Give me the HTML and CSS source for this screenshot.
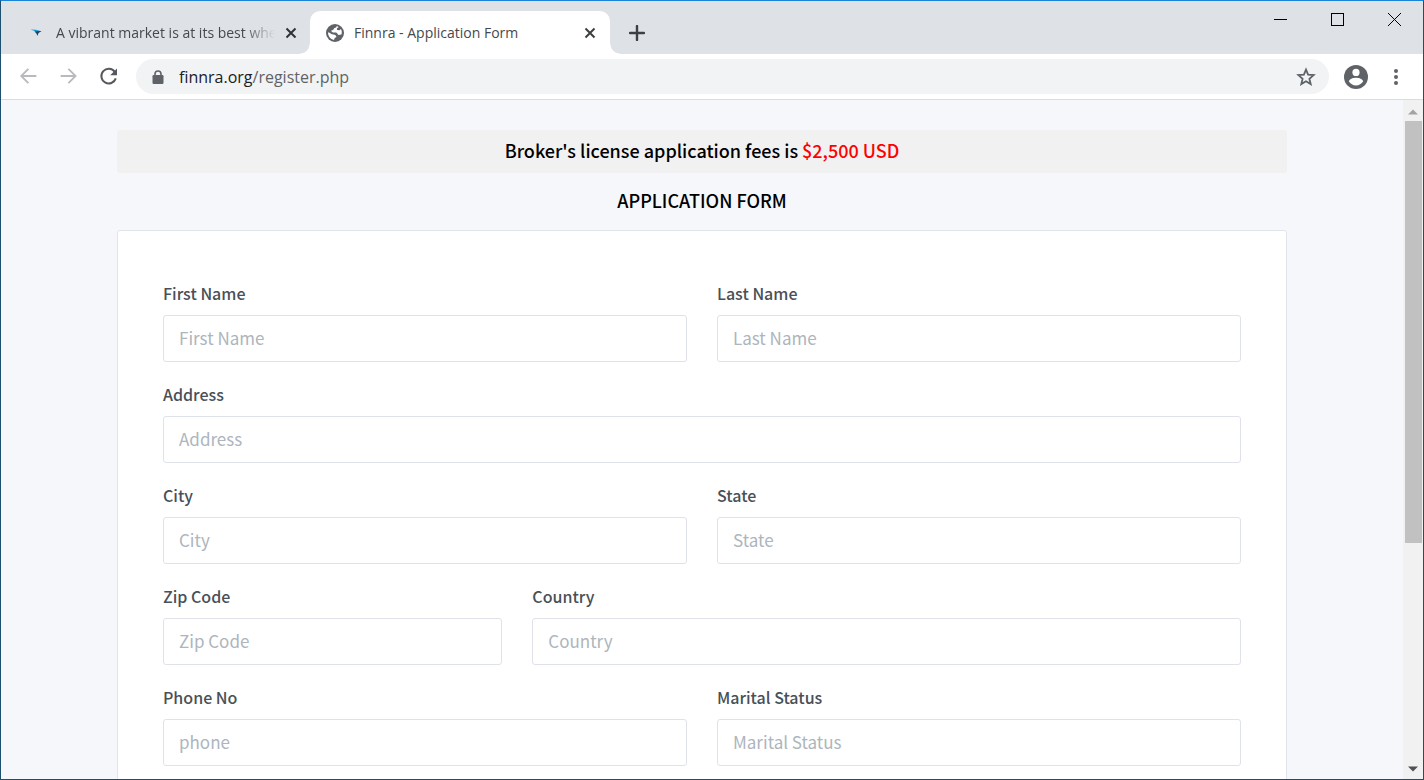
FILE: index.html
```html
<!DOCTYPE html>
<html lang="en">
<head>
  <meta charset="UTF-8">
  <meta name="viewport" content="width=device-width, initial-scale=1">
  <title>Finnra - Application Form</title>
  <link rel="stylesheet" href="styles.css">
</head>
<body>

<div class="window">
  <header class="tab-bar">
    <div class="tab">
      <svg class="tab-icon" viewBox="0 0 16 16" width="16" height="16">
        <path d="M0.5 4.5 L6 4.8 L11.5 6.2 L7 8 C5.5 6.5 3.5 5.5 0.5 4.5 Z" fill="#1b9ad6"/>
        <path d="M4.5 6.5 L11.5 6 L8.5 8 L7.5 11 C7 9.5 6 7.5 4.5 6.5 Z" fill="#13446e"/>
      </svg>
      <span class="tab-title fade">A vibrant market is at its best whe</span>
      <button class="tab-close" aria-label="Close tab">
        <svg viewBox="0 0 12 12" width="12" height="12"><path d="M1.5 1.5 L10.5 10.5 M10.5 1.5 L1.5 10.5" stroke="#2f3236" stroke-width="2"/></svg>
      </button>
    </div>
    <div class="tab active">
      <svg class="tab-icon" viewBox="0 0 18 18" width="18" height="18">
        <circle cx="9" cy="9" r="9" fill="#5f6368"/>
        <path d="M10.8 2 C10.6 3.6 9.4 4 8.2 4.1 C8 5.6 6.8 6.2 5.4 6.6 C5.2 8 6.2 8.4 7.6 8.4 L10 8.4 C11.6 8.8 11.4 10.6 12.6 11 L15.4 10.6 C16.1 8.8 15.9 6.7 14.9 5 L13.4 6.3 L11.2 6 L10.8 4.6 L12.7 3 Z M2 8.4 C2 12.1 4.3 15.1 8 15.9 L8.8 13.8 C10.4 13.6 10.8 12.4 9.8 11.4 C8.6 10.2 6 11 5 9.8 C4.2 8.8 3 8.4 2 8.4 Z" fill="#fff"/>
      </svg>
      <span class="tab-title">Finnra - Application Form</span>
      <button class="tab-close" aria-label="Close tab">
        <svg viewBox="0 0 12 12" width="12" height="12"><path d="M1.5 1.5 L10.5 10.5 M10.5 1.5 L1.5 10.5" stroke="#3c4043" stroke-width="2"/></svg>
      </button>
    </div>
    <button class="new-tab" aria-label="New tab">
      <svg viewBox="0 0 16 16" width="16" height="16"><path d="M8 1 V15 M1 8 H15" stroke="#3c4043" stroke-width="2.4" stroke-linecap="round"/></svg>
    </button>
    <div class="window-controls">
      <button aria-label="Minimize">
        <svg viewBox="0 0 13 13" width="13" height="13"><path d="M0 6.5 H13" stroke="#000"/></svg>
      </button>
      <button aria-label="Maximize">
        <svg viewBox="0 0 13 13" width="13" height="13"><rect x="0.5" y="0.5" width="12" height="12" fill="none" stroke="#000"/></svg>
      </button>
      <button aria-label="Close">
        <svg viewBox="0 0 13 13" width="13" height="13"><path d="M0 0 L13 13 M13 0 L0 13" stroke="#000"/></svg>
      </button>
    </div>
  </header>

  <nav class="toolbar">
    <button aria-label="Back">
      <svg viewBox="0 0 20 20" width="20" height="20" fill="none" stroke="#b8babd" stroke-width="1.8"><path d="M17.4 9 H3 M9.4 1.8 L2.2 9 L9.4 16.2"/></svg>
    </button>
    <button aria-label="Forward">
      <svg viewBox="0 0 20 20" width="20" height="20" fill="none" stroke="#b8babd" stroke-width="1.8"><path d="M1.6 9 H16 M9.4 1.8 L16.6 9 L9.4 16.2"/></svg>
    </button>
    <button aria-label="Reload">
      <svg viewBox="0 0 20 20" width="20" height="20"><path d="M15.8 4.8 A7.4 7.4 0 1 0 16.8 11.4" fill="none" stroke="#55595e" stroke-width="2"/><path d="M18 1.4 V8.2 H11.2 Z" fill="#55595e"/></svg>
    </button>
    <div class="address-bar">
      <svg viewBox="0 0 12 14" width="12" height="14"><path d="M3 6 V4 A3 3 0 0 1 9 4 V6" fill="none" stroke="#5f6368" stroke-width="1.6"/><rect x="0.5" y="5" width="11" height="9" rx="1.2" fill="#5f6368"/></svg>
      <div class="url" role="textbox" aria-label="Address" contenteditable="true" spellcheck="false"><span class="host">finnra.org</span>/register.php</div>
      <button aria-label="Bookmark this page">
        <svg viewBox="0 0 20 20" width="20" height="20"><path d="M10 2.6 L12.1 7.7 L17.6 8.1 L13.4 11.7 L14.7 17.1 L10 14.2 L5.3 17.1 L6.6 11.7 L2.4 8.1 L7.9 7.7 Z" fill="none" stroke="#5f6368" stroke-width="1.8"/></svg>
      </button>
    </div>
    <button aria-label="Profile">
      <svg viewBox="0 0 24 24" width="24" height="24"><circle cx="12" cy="12" r="12" fill="#5f6368"/><circle cx="12" cy="7.4" r="3.6" fill="#fff"/><path d="M4.8 16.2 C6 13.5 9.5 12.8 12 12.8 S18 13.5 19.2 16.2 C17.6 18.7 15 20.4 12 20.4 S6.4 18.7 4.8 16.2 Z" fill="#fff"/></svg>
    </button>
    <button aria-label="Menu">
      <svg viewBox="0 0 4 16" width="4" height="16" fill="#5f6368"><circle cx="2" cy="2" r="2"/><circle cx="2" cy="8" r="2"/><circle cx="2" cy="14" r="2"/></svg>
    </button>
  </nav>

  <div class="view">
    <main class="page">
      <div class="container">
        <p class="fees">Broker's license application fees is <span class="price">$2,500 USD</span></p>
        <h1>APPLICATION FORM</h1>
        <form class="panel">
          <div class="field half">
            <label for="firstName">First Name</label>
            <input type="text" id="firstName" placeholder="First Name">
          </div>
          <div class="field half">
            <label for="lastName">Last Name</label>
            <input type="text" id="lastName" placeholder="Last Name">
          </div>
          <div class="field full">
            <label for="address">Address</label>
            <input type="text" id="address" placeholder="Address">
          </div>
          <div class="field half">
            <label for="city">City</label>
            <input type="text" id="city" placeholder="City">
          </div>
          <div class="field half">
            <label for="state">State</label>
            <input type="text" id="state" placeholder="State">
          </div>
          <div class="field third">
            <label for="zip">Zip Code</label>
            <input type="text" id="zip" placeholder="Zip Code">
          </div>
          <div class="field two-thirds">
            <label for="country">Country</label>
            <input type="text" id="country" placeholder="Country">
          </div>
          <div class="field half">
            <label for="phone">Phone No</label>
            <input type="text" id="phone" placeholder="phone">
          </div>
          <div class="field half">
            <label for="marital">Marital Status</label>
            <input type="text" id="marital" placeholder="Marital Status">
          </div>
        </form>
      </div>
    </main>
    <div class="scrollbar">
      <svg viewBox="0 0 10 6" width="10" height="6"><path d="M0 5.5 L5 0.5 L10 5.5 Z" fill="#a3a3a3"/></svg>
      <div class="track"><div class="thumb"></div></div>
      <svg viewBox="0 0 10 6" width="10" height="6"><path d="M0 0.5 L5 5.5 L10 0.5 Z" fill="#505050"/></svg>
    </div>
  </div>
</div>

</body>
</html>
```
FILE: styles.css
```css
* {
  box-sizing: border-box;
}
body {
  margin: 0;
  font-family: "Noto Sans CJK SC", "Noto Sans", sans-serif;
  color: #495057;
}
svg {
  display: block;
  flex: none;
}
button {
  display: flex;
  align-items: center;
  justify-content: center;
  flex: none;
  padding: 0;
  border: none;
  background: none;
  cursor: pointer;
}
.window {
  display: flex;
  flex-direction: column;
  height: 100vh;
  border: 1px solid #1d4f6e;
  border-top-color: #1883d7;
  background: #fff;
}

/* tabs */
.tab-bar {
  display: flex;
  align-items: flex-end;
  flex: none;
  height: 53px;
  padding-left: 9px;
  background: #dee1e6;
  font-family: "Open Sans", sans-serif;
  font-size: 14px;
}
.tab {
  display: flex;
  align-items: center;
  gap: 10px;
  flex: 0 1 300px;
  min-width: 0;
  height: 43px;
  padding: 0 13px 0 20px;
  color: #45494d;
}
.tab.active {
  position: relative;
  padding: 0 14px 0 16px;
  border-radius: 10px 10px 0 0;
  background: #fff;
}
.tab.active::before,
.tab.active::after {
  content: "";
  position: absolute;
  bottom: 0;
  width: 10px;
  height: 10px;
}
.tab.active::before {
  left: -10px;
  background: radial-gradient(circle at 0 0, #dee1e6 9px, #fff 10px);
}
.tab.active::after {
  right: -10px;
  background: radial-gradient(circle at 100% 0, #dee1e6 9px, #fff 10px);
}
.tab-title {
  flex: 1;
  overflow: hidden;
  white-space: nowrap;
}
.tab-title.fade {
  -webkit-mask-image: linear-gradient(to left, transparent, #000 32px);
  mask-image: linear-gradient(to left, transparent, #000 32px);
}
.tab-close {
  width: 12px;
  height: 24px;
}
.new-tab {
  width: 54px;
  height: 43px;
}
.window-controls {
  display: flex;
  align-self: flex-start;
  margin-left: auto;
}
.window-controls button {
  width: 57px;
  height: 37px;
}

/* toolbar */
.toolbar {
  display: flex;
  align-items: center;
  flex: none;
  height: 46px;
  padding: 0 7px 0 8px;
  border-bottom: 1px solid #dadce0;
}
.toolbar > button {
  width: 40px;
  height: 40px;
}
.address-bar {
  display: flex;
  align-items: center;
  gap: 15px;
  flex: 1;
  height: 35px;
  margin: 0 7px;
  padding: 0 13px 0 16px;
  border-radius: 18px;
  background: #f1f3f4;
}
.url {
  flex: 1;
  font-family: "Open Sans", sans-serif;
  font-size: 16px;
  line-height: 24px;
  color: #5f6368;
  outline: none;
}
.host {
  color: #202124;
}

/* page */
.view {
  display: flex;
  flex: 1;
  min-height: 0;
}
.page {
  flex: 1;
  overflow-y: auto;
  scrollbar-width: none;
  padding: 30px 15px;
  background: #f5f7fb;
}
.container {
  max-width: 1170px;
  margin: 0 auto;
}
.fees,
h1 {
  margin: 0 0 7px;
  padding-bottom: 2px;
  font-size: 18px;
  font-weight: 500;
  line-height: 41px;
  text-align: center;
  color: #000;
}
.fees {
  border-radius: 3px;
  background: #f1f1f1;
}
.price {
  color: #f00;
}
.panel {
  display: grid;
  grid-template-columns: repeat(12, 1fr);
  gap: 15px 30px;
  padding: 45px;
  border: 1px solid #e0e5ec;
  border-radius: 3px;
  background: #fff;
}
.half {
  grid-column: span 6;
}
.full {
  grid-column: span 12;
}
.third {
  grid-column: span 4;
}
.two-thirds {
  grid-column: span 8;
}
label {
  display: block;
  margin-bottom: 4px;
  font-size: 16px;
  font-weight: 500;
  line-height: 35px;
}
input {
  display: block;
  width: 100%;
  height: 47px;
  padding: 0 15px 2px;
  border: 1px solid #e0e2ea;
  border-radius: 3px;
  background: #fff;
  font-family: inherit;
  font-size: 17px;
  color: #495057;
}
input::placeholder {
  color: #adb5bd;
}

/* scrollbar */
.scrollbar {
  display: flex;
  flex-direction: column;
  align-items: center;
  width: 20px;
  padding: 9px 0 7px;
  gap: 6px;
  background: #f1f1f1;
}
.track {
  flex: 1;
  align-self: stretch;
  padding: 0 1px 0 2px;
}
.thumb {
  height: 66%;
  background: #c1c1c1;
}
```
